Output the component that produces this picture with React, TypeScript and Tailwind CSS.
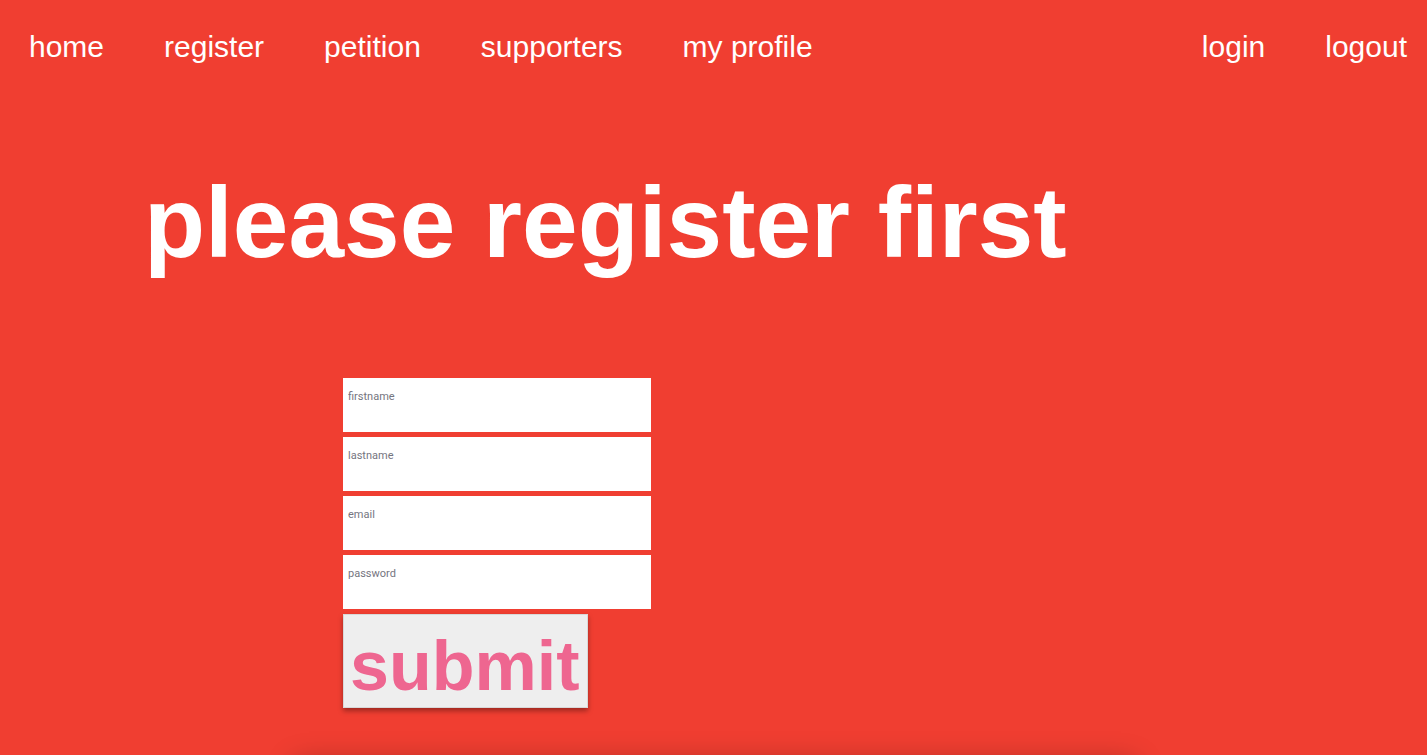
import React from 'react';

const NAV_LEFT = ['home', 'register', 'petition', 'supporters', 'my profile'];
const NAV_RIGHT = ['login', 'logout'];
const FIELDS = [
  { name: 'firstname', type: 'text' },
  { name: 'lastname', type: 'text' },
  { name: 'email', type: 'email' },
  { name: 'password', type: 'password' },
];

const App: React.FC = () => {
  return (
    <div className="h-[755px] w-full overflow-hidden bg-[#f03e31] font-['Liberation_Sans',Arial,sans-serif] text-white">
      {/* Nav */}
      <nav className="flex justify-between pl-[29px] pr-[20px] pt-[32px] text-[30px] leading-none">
        <div className="flex gap-[60px]">
          {NAV_LEFT.map((item) => (
            <a key={item} href="#" className="text-white">{item}</a>
          ))}
        </div>
        <div className="flex gap-[60px]">
          {NAV_RIGHT.map((item) => (
            <a key={item} href="#" className="text-white">{item}</a>
          ))}
        </div>
      </nav>

      {/* Heading */}
      <h1 className="mt-[110px] pl-[144px] text-[100px] font-bold leading-none">please register first</h1>

      {/* Form */}
      <form className="mt-[106px] ml-[343px] flex w-[308px] flex-col gap-[5px]">
        {FIELDS.map((f) => (
          <input
            key={f.name}
            type={f.type}
            placeholder={f.name}
            className="box-border block h-[54px] w-[308px] bg-white pl-[5px] pt-[7px] pb-[25px] text-[11px] text-gray-700 outline-none placeholder:text-[#757580] font-['Roboto',sans-serif]"
          />
        ))}
        <button
          type="button"
          className="box-border h-[94px] w-[245px] border border-[#d8d8d8] bg-[#eeeeee] pl-[6px] pt-[10px] text-left text-[70px] font-bold leading-[80px] text-[#ee6690] shadow-[0_3px_5px_rgba(0,0,0,0.35)]"
        >
          submit
        </button>
      </form>

      {/* Card below the fold */}
      <div className="mt-[55px] ml-[295px] h-[200px] w-[840px] bg-[#e5392d] shadow-[0_0_28px_rgba(0,0,0,0.3)]"></div>
    </div>
  );
};

export default App;
